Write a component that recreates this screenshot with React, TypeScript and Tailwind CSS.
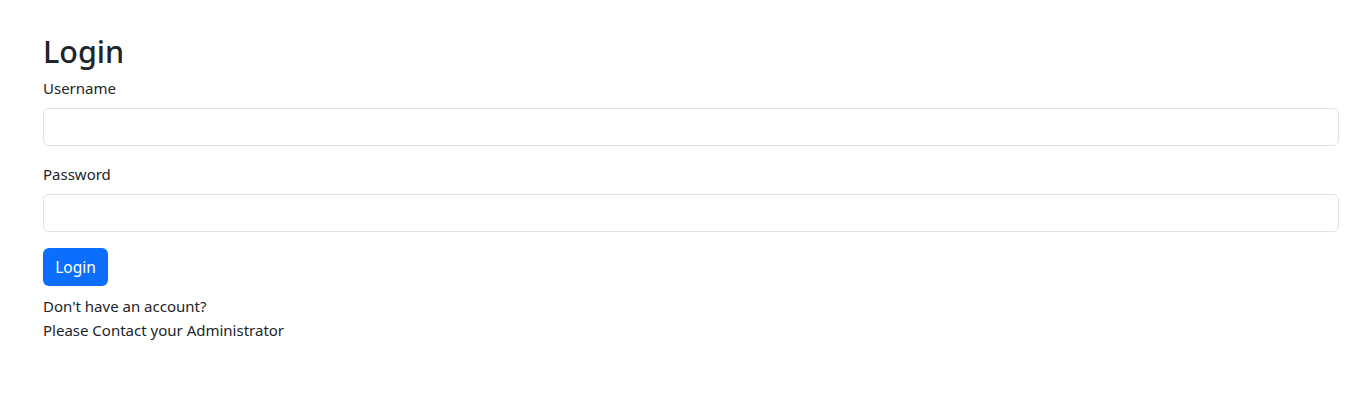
export default function App() {
  return (
    <div className="min-h-screen bg-white font-['Segoe_UI','Noto_Sans',sans-serif] text-[15px] leading-[24px] text-[#212529]">
      <div className="pl-[43px] pr-[31px] pt-[32px]">
        <h2 className="mb-[6px] text-[30.5px] font-medium leading-[38px]">Login</h2>
        <form className="flex flex-col" onSubmit={(e) => e.preventDefault()}>
          <label className="mb-[8px] block">Username</label>
          <input
            type="text"
            className="mb-[16px] h-[38px] w-full rounded-[6px] border border-[#dee2e6] px-3 outline-none"
          />
          <label className="mb-[8px] block">Password</label>
          <input
            type="password"
            className="mb-[16px] h-[38px] w-full rounded-[6px] border border-[#dee2e6] px-3 outline-none"
          />
          <div>
            <button
              type="submit"
              className="h-[38px] w-[65px] rounded-[6px] bg-[#0d6efd] text-[15.5px] text-white"
            >
              Login
            </button>
          </div>
        </form>
        <p className="mt-[8px]">Don't have an account?</p>
        <p>Please Contact your Administrator</p>
      </div>
    </div>
  )
}
